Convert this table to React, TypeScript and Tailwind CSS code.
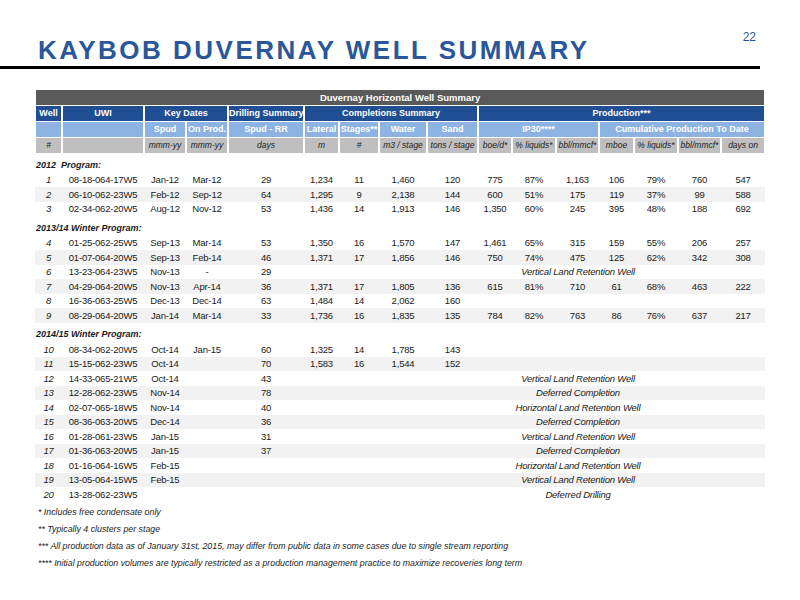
import React from 'react';

type Well = {
  n: number;
  uwi: string;
  spud?: string;
  prod?: string;
  days?: string;
  lat?: string;
  stages?: string;
  water?: string;
  sand?: string;
  ip?: [string, string, string];
  cum?: [string, string, string, string];
  note?: string;
};

type Group = { label: string; wells: Well[] };

const groups: Group[] = [
  {
    label: '2012  Program:',
    wells: [
      { n: 1, uwi: '08-18-064-17W5', spud: 'Jan-12', prod: 'Mar-12', days: '29', lat: '1,234', stages: '11', water: '1,460', sand: '120', ip: ['775', '87%', '1,163'], cum: ['106', '79%', '760', '547'] },
      { n: 2, uwi: '06-10-062-23W5', spud: 'Feb-12', prod: 'Sep-12', days: '64', lat: '1,295', stages: '9', water: '2,138', sand: '144', ip: ['600', '51%', '175'], cum: ['119', '37%', '99', '588'] },
      { n: 3, uwi: '02-34-062-20W5', spud: 'Aug-12', prod: 'Nov-12', days: '53', lat: '1,436', stages: '14', water: '1,913', sand: '146', ip: ['1,350', '60%', '245'], cum: ['395', '48%', '188', '692'] },
    ],
  },
  {
    label: '2013/14 Winter Program:',
    wells: [
      { n: 4, uwi: '01-25-062-25W5', spud: 'Sep-13', prod: 'Mar-14', days: '53', lat: '1,350', stages: '16', water: '1,570', sand: '147', ip: ['1,461', '65%', '315'], cum: ['159', '55%', '206', '257'] },
      { n: 5, uwi: '01-07-064-20W5', spud: 'Sep-13', prod: 'Feb-14', days: '46', lat: '1,371', stages: '17', water: '1,856', sand: '146', ip: ['750', '74%', '475'], cum: ['125', '62%', '342', '308'] },
      { n: 6, uwi: '13-23-064-23W5', spud: 'Nov-13', prod: '-', days: '29', note: 'Vertical Land Retention Well' },
      { n: 7, uwi: '04-29-064-20W5', spud: 'Nov-13', prod: 'Apr-14', days: '36', lat: '1,371', stages: '17', water: '1,805', sand: '136', ip: ['615', '81%', '710'], cum: ['61', '68%', '463', '222'] },
      { n: 8, uwi: '16-36-063-25W5', spud: 'Dec-13', prod: 'Dec-14', days: '63', lat: '1,484', stages: '14', water: '2,062', sand: '160' },
      { n: 9, uwi: '08-29-064-20W5', spud: 'Jan-14', prod: 'Mar-14', days: '33', lat: '1,736', stages: '16', water: '1,835', sand: '135', ip: ['784', '82%', '763'], cum: ['86', '76%', '637', '217'] },
    ],
  },
  {
    label: '2014/15 Winter Program:',
    wells: [
      { n: 10, uwi: '08-34-062-20W5', spud: 'Oct-14', prod: 'Jan-15', days: '60', lat: '1,325', stages: '14', water: '1,785', sand: '143' },
      { n: 11, uwi: '15-15-062-23W5', spud: 'Oct-14', days: '70', lat: '1,583', stages: '16', water: '1,544', sand: '152' },
      { n: 12, uwi: '14-33-065-21W5', spud: 'Oct-14', days: '43', note: 'Vertical Land Retention Well' },
      { n: 13, uwi: '12-28-062-23W5', spud: 'Nov-14', days: '78', note: 'Deferred Completion' },
      { n: 14, uwi: '02-07-065-18W5', spud: 'Nov-14', days: '40', note: 'Horizontal Land Retention Well' },
      { n: 15, uwi: '08-36-063-20W5', spud: 'Dec-14', days: '36', note: 'Deferred Completion' },
      { n: 16, uwi: '01-28-061-23W5', spud: 'Jan-15', days: '31', note: 'Vertical Land Retention Well' },
      { n: 17, uwi: '01-36-063-20W5', spud: 'Jan-15', days: '37', note: 'Deferred Completion' },
      { n: 18, uwi: '01-16-064-16W5', spud: 'Feb-15', note: 'Horizontal Land Retention Well' },
      { n: 19, uwi: '13-05-064-15W5', spud: 'Feb-15', note: 'Vertical Land Retention Well' },
      { n: 20, uwi: '13-28-062-23W5', note: 'Deferred Drilling' },
    ],
  },
];

const shaded = [2, 5, 7, 9, 11, 13, 15, 17, 19];

const colWidths = [27, 82, 42, 42, 76, 35, 40, 48, 51, 34, 44, 43, 35, 44, 43, 44];

const footnotes = [
  '* Includes free condensate only',
  '** Typically 4 clusters per stage',
  '*** All production data as of January 31st, 2015, may differ from public data in some cases due to single stream reporting',
  '**** Initial production volumes are typically restricted as a production management practice to maximize recoveries long term',
];

const th = 'h-[16px] p-0 border-y border-x-2 border-white leading-none font-bold text-white text-[9px] whitespace-nowrap';
const sub = 'h-[16px] p-0 border-y border-x-2 border-white leading-none font-normal italic text-[8.5px] text-[#222] bg-[#bfbfbf] whitespace-nowrap';

const WellRow: React.FC<{ w: Well }> = ({ w }) => {
  const cells = [w.lat, w.stages, w.water, w.sand];
  return (
    <tr className={`h-[14.5px] ${shaded.includes(w.n) ? 'bg-[#f2f2f2]' : ''}`}>
      <td className="p-0 italic">{w.n}</td>
      <td className="p-0">{w.uwi}</td>
      <td className="p-0">{w.spud}</td>
      <td className="p-0">{w.prod}</td>
      <td className="p-0">{w.days}</td>
      {cells.map((c, i) => (
        <td key={i} className="p-0">{c}</td>
      ))}
      {w.note ? (
        <>
          <td colSpan={5} className="p-0 italic">{w.note}</td>
          <td className="p-0"></td>
          <td className="p-0"></td>
        </>
      ) : (
        <>
          {[...(w.ip ?? ['', '', '']), ...(w.cum ?? ['', '', '', ''])].map((c, i) => (
            <td key={i} className="p-0">{c}</td>
          ))}
        </>
      )}
    </tr>
  );
};

const App: React.FC = () => {
  return (
    <div className="w-[800px] h-[600px] bg-white overflow-hidden font-['Liberation_Sans',Arial,sans-serif] text-[#1a1a1a]">
      {/* Title */}
      <div className="flex items-start pl-[38px] pr-[44px]">
        <h1 className="pt-[37px] text-[26px] leading-none font-bold tracking-[2.5px] text-[#2a579a]">
          KAYBOB DUVERNAY WELL SUMMARY
        </h1>
        <div className="ml-auto pt-[31px] text-[12px] leading-none text-[#2a579a]">22</div>
      </div>
      <div className="mt-[3px] w-[760px] h-[3px] bg-black"></div>

      {/* Table */}
      <div className="pl-[34px] mt-[20px]">
        <table className="table-fixed border-collapse text-center text-[9.5px] tracking-[-0.2px] leading-none w-[732px] whitespace-nowrap">
          <colgroup>
            {colWidths.map((w, i) => (
              <col key={i} style={{ width: w }} />
            ))}
          </colgroup>
          <thead className="tracking-normal">
            <tr>
              <th colSpan={16} className={`${th} bg-[#595959] !text-[9.5px]`}>Duvernay Horizontal Well Summary</th>
            </tr>
            <tr className="bg-[#1f4e93]">
              <th className={th}>Well</th>
              <th className={th}>UWI</th>
              <th colSpan={2} className={th}>Key Dates</th>
              <th className={th}>Drilling Summary</th>
              <th colSpan={4} className={th}>Completions Summary</th>
              <th colSpan={7} className={th}>Production***</th>
            </tr>
            <tr className="bg-[#8db3e2]">
              <th className={th}></th>
              <th className={th}></th>
              <th className={th}>Spud</th>
              <th className={th}>On Prod.</th>
              <th className={th}>Spud - RR</th>
              <th className={th}>Lateral</th>
              <th className={th}>Stages**</th>
              <th className={th}>Water</th>
              <th className={th}>Sand</th>
              <th colSpan={3} className={th}>IP30****</th>
              <th colSpan={4} className={th}>Cumulative Production To Date</th>
            </tr>
            <tr>
              {['#', '', 'mmm-yy', 'mmm-yy', 'days', 'm', '#', 'm3 / stage', 'tons / stage', 'boe/d*', '% liquids*', 'bbl/mmcf*', 'mboe', '% liquids*', 'bbl/mmcf*', 'days on'].map((t, i) => (
                <th key={i} className={sub}>{t}</th>
              ))}
            </tr>
          </thead>
          <tbody>
            {groups.map((g) => (
              <React.Fragment key={g.label}>
                <tr className="h-[19.4px]">
                  <td colSpan={16} className="p-0 pl-[1px] pt-[5px] text-left font-bold italic tracking-normal text-[9px] whitespace-pre">
                    {g.label}
                  </td>
                </tr>
                {g.wells.map((w) => (
                  <WellRow key={w.n} w={w} />
                ))}
              </React.Fragment>
            ))}
          </tbody>
        </table>
      </div>

      {/* Footnotes */}
      <div className="pl-[38px] mt-[2px] text-[8.8px] leading-[17px] italic text-[#222]">
        {footnotes.map((f) => (
          <div key={f}>{f}</div>
        ))}
      </div>
    </div>
  );
};

export default App;
